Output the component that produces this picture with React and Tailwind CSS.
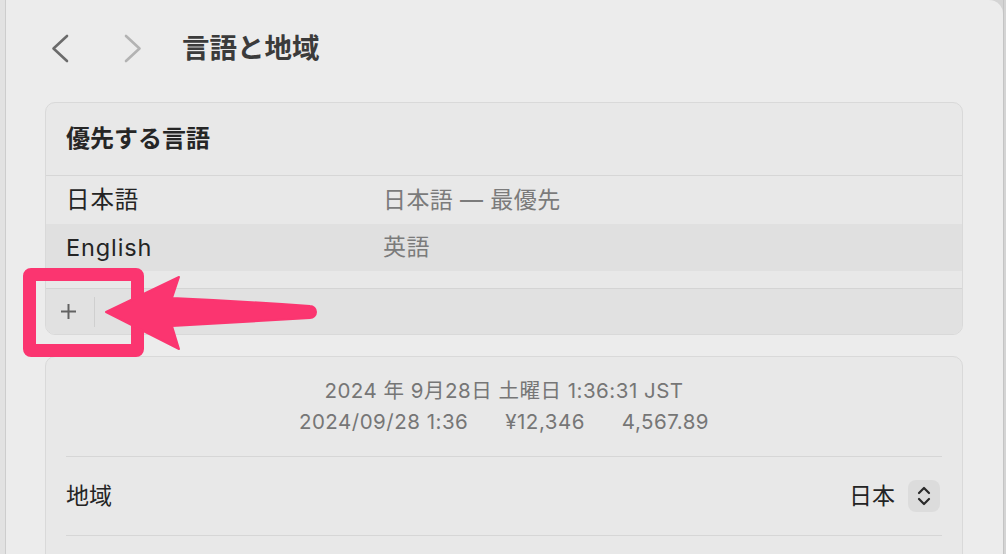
import React from 'react';

const font = { fontFamily: 'Inter, "Noto Sans CJK JP", sans-serif' };

const languages = [
  { name: '日本語', detail: '日本語 — 最優先', shade: 'bg-[#e8e8e8]' },
  { name: 'English', detail: '英語', shade: 'bg-[#e0e0e0]' },
];

const Annotation = () => (
  <svg className="absolute left-0 top-0 pointer-events-none" width="1006" height="554">
    <rect x="29.5" y="274.5" width="108" height="76" rx="1.5" fill="none" stroke="#fb3570" strokeWidth="13" />
    <path
      d="M106 312 L179 277 L172 298 Q240 301 310 306 A6 6 0 0 1 310 318 Q240 322 172 326 L179 349 Z"
      fill="#fb3570"
      stroke="#fb3570"
      strokeWidth="2"
      strokeLinejoin="round"
    />
  </svg>
);

const App = () => {
  return (
    <div className="relative w-[1006px] h-[554px] flex bg-[#d4d4d4] overflow-hidden" style={font}>
      <div className="w-[6px] bg-[#e2e2e2] border-r border-[#cdcdcd]" />

      <div className="flex-1 bg-[#ececec] rounded-tr-[14px] pl-[39px] pr-[40px]">
        <div className="flex items-center h-[97px]">
          <svg className="ml-[6px]" width="18" height="31" viewBox="0 0 18 31">
            <path d="M16 3 L2.5 15.5 L16 28" fill="none" stroke="#6b6b6b" strokeWidth="2.6" strokeLinecap="round" strokeLinejoin="round" />
          </svg>
          <svg className="ml-[55px]" width="18" height="31" viewBox="0 0 18 31">
            <path d="M2 3 L15.5 15.5 L2 28" fill="none" stroke="#b3b3b3" strokeWidth="2.6" strokeLinecap="round" strokeLinejoin="round" />
          </svg>
          <h1 className="ml-[40px] text-[27.5px] font-bold text-[#3b3b3b] leading-none">言語と地域</h1>
        </div>

        <div className="mt-[5px] rounded-[10px] border border-[#d9d9d9] bg-[#e8e8e8] overflow-hidden">
          <div className="h-[73px] flex items-center pl-[20px] border-b border-[#d6d6d6]">
            <span className="text-[24px] font-semibold text-[#262626]">優先する言語</span>
          </div>
          {languages.map((lang) => (
            <div key={lang.name} className={`flex items-center pl-[20px] ${lang.shade} ${lang.name === 'English' ? 'h-[47px]' : 'h-[48px]'}`}>
              <span className="w-[317px] text-[23.5px] tracking-[0.9px] text-[#242424]">{lang.name}</span>
              <span className="text-[23px] tracking-[0.4px] text-[#7b7b7b]">{lang.detail}</span>
            </div>
          ))}
          <div className="h-[17px]" />
          <div className="h-[46px] flex items-center border-t border-[#d4d4d4] bg-[#e1e1e1]">
            <svg className="ml-[13px]" width="19" height="19" viewBox="0 0 19 19">
              <path d="M9.5 2 V17 M2 9.5 H17" stroke="#626262" strokeWidth="2" />
            </svg>
            <div className="ml-[16px] w-px h-[30px] bg-[#cfcfcf]" />
          </div>
        </div>

        <div className="mt-[21px] rounded-[10px] border border-[#d9d9d9] bg-[#e8e8e8] h-[220px]">
          <div className="pt-[18px] pb-[19px] text-center text-[20.5px] tracking-[0.5px] leading-[31px] text-[#767676]">
            <div>2024 年 9月28日 土曜日 1:36:31 JST</div>
            <div className="flex justify-center gap-[37px]">
              <span>2024/09/28 1:36</span>
              <span>¥12,346</span>
              <span>4,567.89</span>
            </div>
          </div>
          <div className="mx-[20px] border-t border-[#d6d6d6]" />
          <div className="h-[78px] flex items-center pl-[20px] pr-[22px]">
            <span className="flex-1 text-[23px] text-[#242424]">地域</span>
            <span className="text-[23px] text-[#242424]">日本</span>
            <div className="ml-[13px] w-[32px] h-[32px] rounded-[8px] bg-[#dcdcdc] flex items-center justify-center">
              <svg width="16" height="22" viewBox="0 0 16 22">
                <path d="M3 8 L8 3 L13 8 M3 14 L8 19 L13 14" fill="none" stroke="#2a2a2a" strokeWidth="2.2" strokeLinecap="round" strokeLinejoin="round" />
              </svg>
            </div>
          </div>
          <div className="mx-[20px] border-t border-[#d6d6d6]" />
        </div>
      </div>

      <div className="w-[3px] bg-[#d4d4d4] border-l border-[#c4c4c4]" />

      <Annotation />
    </div>
  );
};

export default App;
